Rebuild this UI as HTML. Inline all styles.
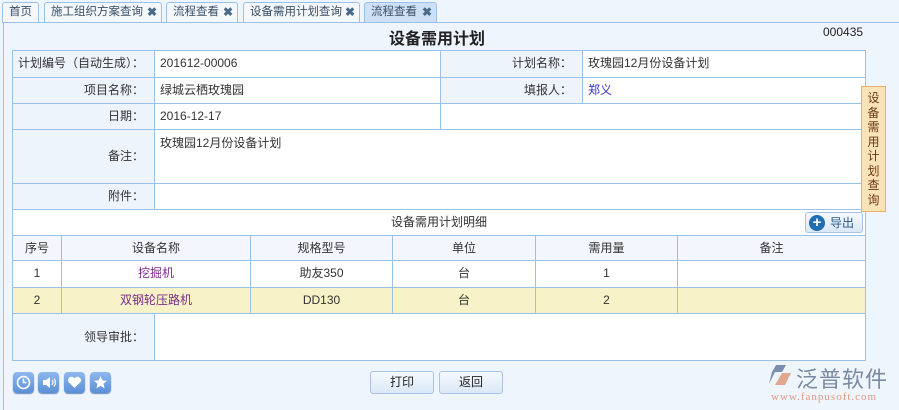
<!DOCTYPE html>
<html><head><meta charset="utf-8"><style>
*{margin:0;padding:0;box-sizing:border-box}
body{width:899px;height:410px;background:#eff5fd;font-family:"Liberation Sans","Noto Sans CJK SC",sans-serif;font-size:12px;color:#333;position:relative;overflow:hidden}
.a{position:absolute}
.tab{position:absolute;top:2px;height:21px;border:1px solid #9cc1e6;border-bottom:none;background:#f4f8fd;border-radius:3px 3px 0 0;line-height:19px;padding-left:6px;color:#3a4f66;font-size:11.5px;white-space:nowrap}
.tab b{position:absolute;right:4px;top:0;font-size:12px;color:#4a6a8a}
.panel{position:absolute;left:3px;top:22px;width:896px;height:388px;border-left:1px solid #9cc1e6;border-top:1px solid #9cc1e6}
.c{position:absolute;border:1px solid #9cc1e6;background:#fff;line-height:25px;padding-left:5px;white-space:nowrap}
.l{background:#eef4fc;text-align:right;padding-right:10px}
.ct{text-align:center;padding:0}
.btn{position:absolute;border:1px solid #a7c4e4;border-radius:3px;background:linear-gradient(#f5f9fe,#dbe8f7);text-align:center;line-height:20px;color:#222}
.ic{position:absolute;top:372px;width:21px;height:21px;border-radius:4px;background:linear-gradient(#8fb8ee,#5b8fd6);box-shadow:0 1px 1px #6a8ab8}
</style></head><body>
<div class="tab" style="left:2px;width:37px">首页</div>
<div class="tab" style="left:44px;width:118px">施工组织方案查询<b>✖</b></div>
<div class="tab" style="left:166px;width:72px">流程查看<b>✖</b></div>
<div class="tab" style="left:243px;width:117px">设备需用计划查询<b>✖</b></div>
<div class="tab" style="left:364px;width:73px;background:#cde0f5">流程查看<b>✖</b></div>
<div class="panel"></div>
<div class="a" style="left:389px;top:25px;font-size:16px;font-weight:bold;color:#222">设备需用计划</div>
<div class="a" style="left:823px;top:25px;color:#222">000435</div>

<div class="c l" style="left:12px;top:50px;width:143px;height:28px">计划编号（自动生成）：</div>
<div class="c" style="left:154px;top:50px;width:287px;height:28px">201612-00006</div>
<div class="c l" style="left:440px;top:50px;width:143px;height:28px">计划名称：</div>
<div class="c" style="left:582px;top:50px;width:284px;height:28px">玫瑰园12月份设备计划</div>

<div class="c l" style="left:12px;top:77px;width:143px;height:27px">项目名称：</div>
<div class="c" style="left:154px;top:77px;width:287px;height:27px">绿城云栖玫瑰园</div>
<div class="c l" style="left:440px;top:77px;width:143px;height:27px">填报人：</div>
<div class="c" style="left:582px;top:77px;width:284px;height:27px;color:#3333cc">郑义</div>

<div class="c l" style="left:12px;top:103px;width:143px;height:27px">日期：</div>
<div class="c" style="left:154px;top:103px;width:287px;height:27px">2016-12-17</div>
<div class="c" style="left:440px;top:103px;width:426px;height:27px"></div>

<div class="c l" style="left:12px;top:129px;width:143px;height:55px;line-height:53px">备注：</div>
<div class="c" style="left:154px;top:129px;width:712px;height:55px;line-height:26px">玫瑰园12月份设备计划</div>

<div class="c l" style="left:12px;top:183px;width:143px;height:27px">附件：</div>
<div class="c" style="left:154px;top:183px;width:712px;height:27px"></div>

<div class="c ct" style="left:12px;top:209px;width:854px;height:27px">设备需用计划明细</div>
<div class="btn" style="left:805px;top:212px;width:58px;height:21px;text-align:right;padding-right:8px;color:#2a5a8a"><span class="a" style="left:3px;top:2px;width:16px;height:16px;border-radius:50%;background:#1f6db3;color:#fff;font-weight:bold;line-height:16px;text-align:center;font-size:15px">+</span>导出</div>

<div class="c ct" style="left:12px;top:235px;width:50px;height:26px;background:#f3f7fd">序号</div>
<div class="c ct" style="left:61px;top:235px;width:190px;height:26px;background:#f3f7fd">设备名称</div>
<div class="c ct" style="left:250px;top:235px;width:143px;height:26px;background:#f3f7fd">规格型号</div>
<div class="c ct" style="left:392px;top:235px;width:144px;height:26px;background:#f3f7fd">单位</div>
<div class="c ct" style="left:535px;top:235px;width:143px;height:26px;background:#f3f7fd">需用量</div>
<div class="c ct" style="left:677px;top:235px;width:189px;height:26px;background:#f3f7fd">备注</div>

<div class="c ct" style="left:12px;top:260px;width:50px;height:28px">1</div>
<div class="c ct" style="left:61px;top:260px;width:190px;height:28px;color:#7a2a8a">挖掘机</div>
<div class="c ct" style="left:250px;top:260px;width:143px;height:28px">助友350</div>
<div class="c ct" style="left:392px;top:260px;width:144px;height:28px">台</div>
<div class="c ct" style="left:535px;top:260px;width:143px;height:28px">1</div>
<div class="c ct" style="left:677px;top:260px;width:189px;height:28px"></div>

<div class="c ct" style="left:12px;top:287px;width:50px;height:27px;background:#f8f2c8">2</div>
<div class="c ct" style="left:61px;top:287px;width:190px;height:27px;background:#f8f2c8;color:#7a2a8a">双钢轮压路机</div>
<div class="c ct" style="left:250px;top:287px;width:143px;height:27px;background:#f8f2c8">DD130</div>
<div class="c ct" style="left:392px;top:287px;width:144px;height:27px;background:#f8f2c8">台</div>
<div class="c ct" style="left:535px;top:287px;width:143px;height:27px;background:#f8f2c8">2</div>
<div class="c ct" style="left:677px;top:287px;width:189px;height:27px;background:#f8f2c8"></div>

<div class="c l" style="left:12px;top:313px;width:143px;height:48px;line-height:46px">领导审批：</div>
<div class="c" style="left:154px;top:313px;width:712px;height:48px"></div>

<div class="a" style="left:861px;top:86px;width:25px;height:126px;background:#fbe3b8;border:1px solid #e8b070;color:#6a3a10;font-size:12px;line-height:14.5px;text-align:center;padding-top:4px">设<br>备<br>需<br>用<br>计<br>划<br>查<br>询</div>

<div class="ic" style="left:13px"><svg width="21" height="21"><circle cx="10.5" cy="10.5" r="6" fill="none" stroke="#fff" stroke-width="1.6"/><path d="M10.5 6.5v4h3" fill="none" stroke="#fff" stroke-width="1.5"/></svg></div>
<div class="ic" style="left:38px"><svg width="21" height="21"><path d="M5 8h3l4-3v11l-4-3H5z" fill="#fff"/><path d="M14 8q2 2.5 0 5M16 6.5q3 4 0 8" fill="none" stroke="#fff" stroke-width="1.2"/></svg></div>
<div class="ic" style="left:64px"><svg width="21" height="21"><path d="M10.5 16l-6-6a3.3 3.3 0 0 1 6-3.5a3.3 3.3 0 0 1 6 3.5z" fill="#fff"/></svg></div>
<div class="ic" style="left:90px"><svg width="21" height="21"><path d="M10.5 4l1.9 4.4 4.6.4-3.5 3 1.1 4.6-4.1-2.5-4.1 2.5 1.1-4.6-3.5-3 4.6-.4z" fill="#fff"/></svg></div>

<div class="btn" style="left:370px;top:371px;width:64px;height:23px">打印</div>
<div class="btn" style="left:439px;top:371px;width:64px;height:23px">返回</div>

<div class="a" style="left:768px;top:364px"><svg width="26" height="22"><path d="M8 1h10l-4 7h-7l-6 12 3-12z" fill="#7a8fb0"/><path d="M14 9h9l-6 12h-10z" fill="#e0a890"/></svg></div>
<div class="a" style="left:796px;top:362px;font-size:22px;color:#7a8aa2;letter-spacing:1px">泛普软件</div>
<div class="a" style="left:771px;top:391px;font-size:11px;color:#e09880;font-family:'Liberation Serif',serif;letter-spacing:1px">www.fanpusoft.com</div>
</body></html>
